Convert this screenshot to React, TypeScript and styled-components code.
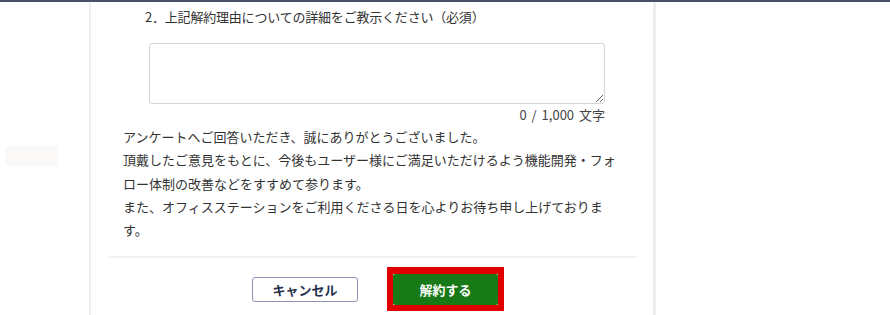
import React from "react";
import styled, { createGlobalStyle } from "styled-components";

const GlobalStyle = createGlobalStyle`
	body {
		margin: 0;
		background: #ffffff;
		font-family: "Noto Sans CJK JP", "Liberation Sans", sans-serif;
		color: #333333;
	}
`;

const TopBar = styled.div`
	height: 2px;
	background: #4b4f66;
`;

const Page = styled.div`
	display: flex;
	height: 313px;
	overflow: hidden;
`;

const Gutter = styled.aside`
	width: 89px;
	flex-shrink: 0;
	padding: 144px 0 0 5px;
	box-sizing: border-box;
`;

const GhostItem = styled.div`
	width: 53px;
	height: 20px;
	background: #fbf8f8;
	border-radius: 2px;
`;

const Panel = styled.section`
	width: 562px;
	border-left: 2px solid #eeeeee;
	border-right: 3px solid #eeeeee;
	padding-top: 5px;
	display: flex;
	flex-direction: column;
`;

const Question = styled.h3`
	margin: 0 0 0 54px;
	font-size: 13px;
	font-weight: 400;
	line-height: 20px;
	color: #333333;
	letter-spacing: -0.2px;
`;

const DetailInput = styled.textarea`
	margin: 16px 0 0 58px;
	width: 456px;
	height: 61px;
	box-sizing: border-box;
	border: 1px solid #d4d4d4;
	border-radius: 3px;
	background: #ffffff;
	resize: vertical;
	font-family: inherit;
`;

const Counter = styled.div`
	width: 514px;
	margin-top: 1px;
	text-align: right;
	font-size: 13px;
	line-height: 20px;
	color: #444444;
	word-spacing: 2px;
`;

const Thanks = styled.p`
	margin: 0 0 0 32px;
	width: 500px;
	font-size: 13px;
	line-height: 23.3px;
	color: #333333;
	line-break: strict;
`;

const Divider = styled.hr`
	margin: 15px 0 0 18px;
	width: 528px;
	height: 2px;
	border: none;
	background: #f1f1f1;
`;

const Actions = styled.div`
	display: flex;
	align-items: center;
	gap: 29px;
	margin: 9px 0 0 161px;
`;

const CancelButton = styled.button`
	width: 106px;
	height: 25px;
	box-sizing: border-box;
	border: 1px solid #8d93b3;
	border-radius: 3px;
	background: #ffffff;
	color: #27304d;
	font-family: inherit;
	font-size: 13px;
	font-weight: 700;
	cursor: pointer;
`;

const Highlight = styled.div`
	border: 6px solid #e10000;
	border-top-width: 7px;
	display: flex;
`;

const SubmitButton = styled.button`
	width: 105px;
	height: 31px;
	border: none;
	border-radius: 2px;
	background: #177a17;
	color: #ffffff;
	font-family: inherit;
	font-size: 13px;
	font-weight: 700;
	cursor: pointer;
`;

const App = () => {
	return (
		<>
			<GlobalStyle />
			<TopBar />
			<Page>
				<Gutter>
					<GhostItem />
				</Gutter>
				<Panel>
					<Question>2．上記解約理由についての詳細をご教示ください（必須）</Question>
					<DetailInput />
					<Counter>0 / 1,000 文字</Counter>
					<Thanks>
						アンケートへご回答いただき、誠にありがとうございました。
						<br />
						頂戴したご意見をもとに、今後もユーザー様にご満足いただけるよう機能開発・フォロー体制の改善などをすすめて参ります。
						<br />
						また、オフィスステーションをご利用くださる日を心よりお待ち申し上げております。
					</Thanks>
					<Divider />
					<Actions>
						<CancelButton>キャンセル</CancelButton>
						<Highlight>
							<SubmitButton>解約する</SubmitButton>
						</Highlight>
					</Actions>
				</Panel>
			</Page>
		</>
	);
};

export default App;
